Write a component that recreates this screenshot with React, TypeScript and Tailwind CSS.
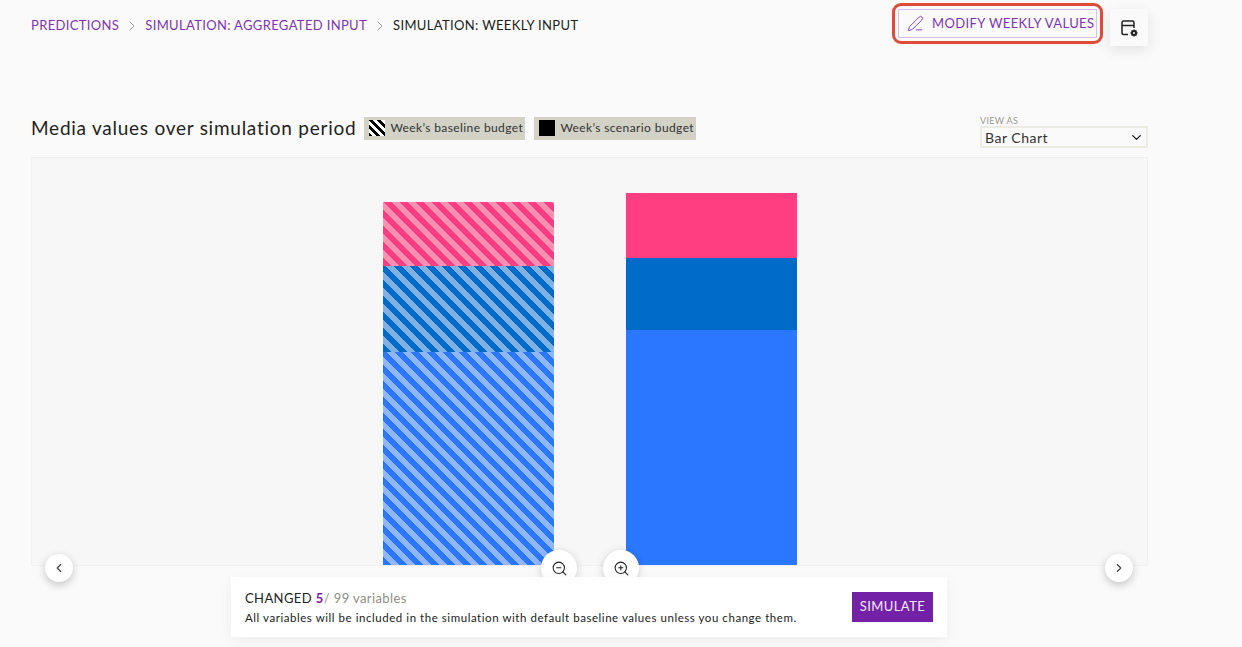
import { ChevronDown, ChevronLeft, ChevronRight, PenLine, Settings, ZoomIn, ZoomOut } from 'lucide-react';

const crumbs = ['PREDICTIONS', 'SIMULATION: AGGREGATED INPUT'];

const baseline = [
  { h: 'h-[64px]', bg: 'bg-[repeating-linear-gradient(45deg,#ff3d80_0,#ff3d80_5.66px,#ff8fb3_5.66px,#ff8fb3_11.32px)]' },
  { h: 'h-[86px]', bg: 'bg-[repeating-linear-gradient(45deg,#006bc8_0,#006bc8_5.66px,#7fb2e2_5.66px,#7fb2e2_11.32px)]' },
  { h: 'h-[213px]', bg: 'bg-[repeating-linear-gradient(45deg,#2a78ff_0,#2a78ff_5.66px,#8fb6ff_5.66px,#8fb6ff_11.32px)]' },
];

const scenario = [
  { h: 'h-[65px]', bg: 'bg-[#ff3d80]' },
  { h: 'h-[72px]', bg: 'bg-[#006bc8]' },
  { h: 'h-[235px]', bg: 'bg-[#2a78ff]' },
];

function Bar({ parts }: { parts: { h: string; bg: string }[] }) {
  return (
    <div className="flex w-[171px] flex-col">
      {parts.map((p) => (
        <div key={p.h} className={`${p.h} ${p.bg}`} />
      ))}
    </div>
  );
}

function TableSettingsIcon() {
  return (
    <svg width="20" height="20" viewBox="0 0 20 20" fill="none" stroke="#222" strokeWidth="1.5">
      <path d="M9 16.5H4.5a1.5 1.5 0 0 1-1.5-1.5V4.5A1.5 1.5 0 0 1 4.5 3h9A1.5 1.5 0 0 1 15 4.5V10" />
      <path d="M3 7.5h12" />
      <circle cx="15" cy="15" r="2" strokeWidth="2" />
      <path d="M15 11.5v1M15 17.5v1M11.5 15h1M17.5 15h1M12.6 12.6l.7.7M16.7 16.7l.7.7M12.6 17.4l.7-.7M16.7 13.3l.7-.7" strokeWidth="1.4" />
    </svg>
  );
}

export default function App() {
  return (
    <div className="h-[647px] w-[1242px] overflow-hidden bg-[#fafafa] pl-[31px] pr-[94px] pt-[3px] font-['Lato',sans-serif] text-[#222]">
      <header className="flex items-start justify-between">
        <nav className="mt-[13px] flex items-center text-[13px] tracking-[0.35px]">
          {crumbs.map((c) => (
            <span key={c} className="flex items-center">
              <a className="text-[#7d35b5]">{c}</a>
              <ChevronRight className="mx-[5px] h-[16px] w-[16px] text-[#8a8a8a]" strokeWidth={1.25} />
            </span>
          ))}
          <span className="text-[#1c1c1c]">SIMULATION: WEEKLY INPUT</span>
        </nav>
        <div className="flex items-start">
          <div className="rounded-[9px] border-[3px] border-[#e04b39] p-[3px]">
            <button className="flex h-[29px] w-[199px] items-center gap-[8px] border border-[#d9bff0] pl-[8px] text-[13px] tracking-[0.4px] text-[#7d35b5]">
              <PenLine className="h-[17px] w-[17px]" strokeWidth={1.25} />
              MODIFY WEEKLY VALUES
            </button>
          </div>
          <button className="ml-[7px] mt-[6px] flex h-[37px] w-[38px] items-center justify-center bg-[#fafafa] shadow-[0_4px_14px_rgba(0,0,0,0.1)]">
            <TableSettingsIcon />
          </button>
        </div>
      </header>

      <section className="mt-[41px] flex h-[40px] items-start justify-between">
        <div className="flex items-center pt-[26px]">
          <div className="hidden" />
        </div>
      </section>

      <section className="-mt-[40px] flex h-[52px] items-start justify-between pt-[29px]">
        <div className="flex items-center">
          <h1 className="text-[19px] leading-[24px] tracking-[0.75px] text-[#222]">Media values over simulation period</h1>
          <div className="ml-[8px] flex h-[23px] w-[161px] items-center bg-[#d2d2c6] pl-[5px] text-[12px] tracking-[0.4px] text-[#333]">
            <span className="mr-[5px] h-[16px] w-[16px] bg-[repeating-linear-gradient(45deg,#000_0,#000_2.8px,#fff_2.8px,#fff_5.6px)]" />
            Week’s baseline budget
          </div>
          <div className="ml-[9px] flex h-[23px] w-[162px] items-center bg-[#d2d2c6] pl-[5px] text-[12px] tracking-[0.4px] text-[#333]">
            <span className="mr-[5px] h-[16px] w-[16px] bg-black" />
            Week’s scenario budget
          </div>
        </div>
        <div className="-mt-[1px] w-[168px]">
          <div className="text-[9px] leading-[11px] tracking-[0.3px] text-[#9a9a8e]">VIEW AS</div>
          <div className="flex h-[22px] items-center justify-between border-2 border-[#ececE4] pl-[3px] pr-[2px] text-[14px] tracking-[0.5px] text-[#333]">
            Bar Chart
            <ChevronDown className="h-[15px] w-[15px] text-[#111]" strokeWidth={2} />
          </div>
        </div>
      </section>

      <section className="relative mt-[18px] flex h-[409px] items-end justify-center gap-[72px] border border-[#f1f1f1] bg-[#f7f7f7]">
        <Bar parts={baseline} />
        <Bar parts={scenario} />
        <button className="absolute -bottom-[17px] -left-[0px] flex h-[28px] w-[28px] translate-x-[13px] items-center justify-center rounded-full bg-white shadow-[0_3px_8px_rgba(0,0,0,0.22)]">
          <ChevronLeft className="h-[14px] w-[14px] text-[#444]" strokeWidth={2} />
        </button>
        <button className="absolute -bottom-[17px] right-[14px] flex h-[28px] w-[28px] items-center justify-center rounded-full bg-white shadow-[0_3px_8px_rgba(0,0,0,0.22)]">
          <ChevronRight className="h-[14px] w-[14px] text-[#444]" strokeWidth={2} />
        </button>
        <button className="absolute -bottom-[21px] left-[509px] flex h-[36px] w-[36px] items-center justify-center rounded-full bg-white shadow-[0_2px_8px_rgba(0,0,0,0.18)]">
          <ZoomOut className="h-[17px] w-[17px] text-[#222]" strokeWidth={1.5} />
        </button>
        <button className="absolute -bottom-[21px] left-[571px] flex h-[36px] w-[36px] items-center justify-center rounded-full bg-white shadow-[0_2px_8px_rgba(0,0,0,0.18)]">
          <ZoomIn className="h-[17px] w-[17px] text-[#222]" strokeWidth={1.5} />
        </button>
      </section>

      <section className="relative z-10 ml-[200px] mt-[11px] flex h-[60px] w-[716px] items-center justify-between bg-white pl-[14px] pr-[14px] shadow-[0_4px_14px_rgba(0,0,0,0.05)]">
        <div>
          <p className="text-[13px] leading-[18px] tracking-[0.4px] text-[#222]">
            CHANGED <span className="font-bold text-[#7322a8]">5</span>
            <span className="text-[#8f8f84]">/ 99 variables</span>
          </p>
          <p className="mt-[3px] text-[11.5px] leading-[15px] tracking-[0.55px] text-[#222]">
            All variables will be included in the simulation with default baseline values unless you change them.
          </p>
        </div>
        <button className="flex h-[30px] w-[81px] items-center justify-center bg-[#7322a8] text-[13px] tracking-[0.4px] text-[#f3eaf8]">
          SIMULATE
        </button>
      </section>
    </div>
  );
}
